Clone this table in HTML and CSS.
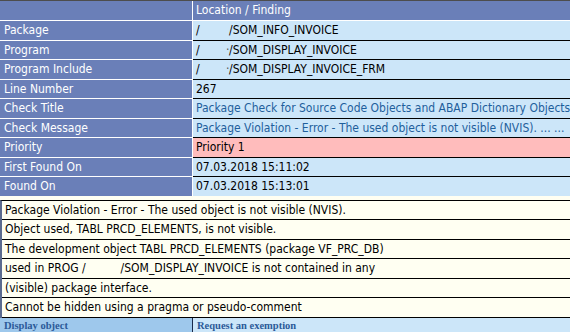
FILE: index.html
```html
<!DOCTYPE html>
<html lang="en">
<head>
<meta charset="utf-8">
<title>Finding</title>
<link rel="stylesheet" href="styles.css">
</head>
<body>
<div class="finding">
  <div class="label head"></div>
  <div class="value head">Location / Finding</div>

  <div class="label">Package</div>
  <div class="value first"><span class="ns">/</span>/SOM_INFO_INVOICE</div>

  <div class="label">Program</div>
  <div class="value"><span class="ns">/<i class="dot">·</i></span>/SOM_DISPLAY_INVOICE</div>

  <div class="label">Program Include</div>
  <div class="value"><span class="ns">/<i class="dot">·</i></span>/SOM_DISPLAY_INVOICE_FRM</div>

  <div class="label">Line Number</div>
  <div class="value">267</div>

  <div class="label">Check Title</div>
  <div class="value link">Package Check for Source Code Objects and ABAP Dictionary Objects</div>

  <div class="label">Check Message</div>
  <div class="value link">Package Violation - Error - The used object is not visible (NVIS). ... ...</div>

  <div class="label">Priority</div>
  <div class="value prio">Priority 1</div>

  <div class="label">First Found On</div>
  <div class="value">07.03.2018 15:11:02</div>

  <div class="label">Found On</div>
  <div class="value">07.03.2018 15:13:01</div>
</div>

<div class="details">
  <div class="line">Package Violation - Error - The used object is not visible (NVIS).</div>
  <div class="line">Object used, TABL PRCD_ELEMENTS, is not visible.</div>
  <div class="line">The development object TABL PRCD_ELEMENTS (package VF_PRC_DB)</div>
  <div class="line">used in PROG /<span class="gap"></span>/SOM_DISPLAY_INVOICE is not contained in any</div>
  <div class="line">(visible) package interface.</div>
  <div class="line">Cannot be hidden using a pragma or pseudo-comment</div>
</div>

<div class="actions">
  <div class="action primary">Display object</div>
  <div class="action">Request an exemption</div>
</div>
</body>
</html>
```

FILE: styles.css
```css
html, body {
  margin: 0;
  padding: 0;
  background: #fffff2;
}

body {
  font-family: "DejaVu Sans Condensed", "Liberation Sans", sans-serif;
  font-size: 12px;
  color: #000;
  overflow: hidden;
}

/* two-column property sheet */
.finding {
  display: grid;
  grid-template-columns: 192px 1fr;
  column-gap: 1px;
  background: #fff;
  border-top: 1px solid #4d4d4d;
}

.label,
.value {
  height: 18.5px;
  line-height: 18.5px;
  padding-left: 4px;
  white-space: nowrap;
  overflow: hidden;
}

.label {
  background: #6a7fb8;
  color: #fff;
  border-top: 1px solid #fff;
}

.value {
  background: #cce6f9;
  border-top: 1px solid #000;
  padding-left: 3px;
}

.label.head,
.value.head {
  background: #6a7fb8;
  color: #fff;
  border-top: 0;
  height: 19px;
  line-height: 19px;
}

.value.first {
  border-top-color: #fff;
}

.value.link {
  color: #1f5f9c;
}

.value.prio {
  background: #ffbcbc;
}

.ns {
  display: inline-block;
  width: 33px;
  position: relative;
}

.dot {
  position: absolute;
  left: 30px;
  font-style: normal;
  color: #555;
}

/* message text block */
.details {
  margin-top: 4px;
  border-left: 2px solid #5b6b8f;
  border-top: 1px solid #000;
}

.line {
  height: 18.5px;
  line-height: 18.5px;
  padding-left: 3px;
  border-bottom: 1px solid #000;
  white-space: nowrap;
}

.gap {
  display: inline-block;
  width: 35px;
}

/* action links at the foot */
.actions {
  display: grid;
  grid-template-columns: 193px 1fr;
}

.action {
  height: 20px;
  line-height: 15px;
  padding-left: 4px;
  background: #cce6f9;
  color: #2b5a98;
  font-family: "Liberation Serif", serif;
  font-weight: bold;
  font-size: 10.5px;
}

.action.primary {
  background: #9ec8ec;
  border-right: 1px solid #1a2a4a;
}
```
